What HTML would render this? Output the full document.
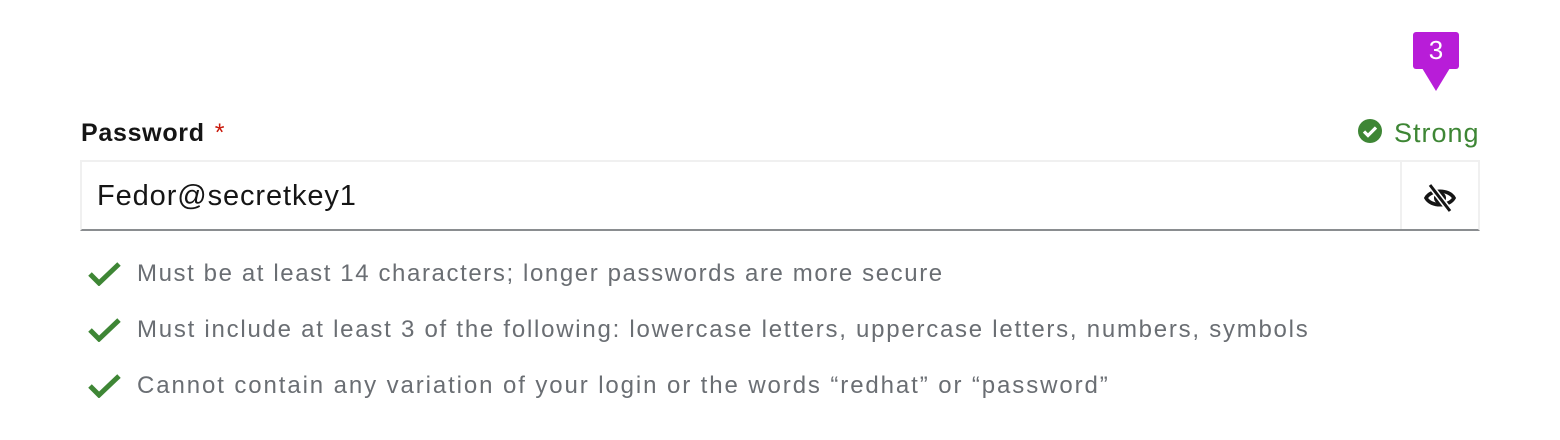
<!DOCTYPE html>
<html><head><style>
body{margin:0;width:1560px;height:440px;background:#fff;font-family:"Liberation Sans",sans-serif;position:relative;overflow:hidden}
.abs{position:absolute;white-space:nowrap}
.label{left:81px;top:119px;font-size:25px;font-weight:bold;color:#151515;letter-spacing:0.7px}
.req{color:#c9190b;margin-left:10px;font-weight:normal}
.strong{left:1394px;top:118px;font-size:27px;color:#3e8635;letter-spacing:1px}
.input{left:80px;top:160px;width:1400px;height:71px;border:2px solid #f0f0f0;border-bottom:2px solid #8a8d90;box-sizing:border-box}
.sep{left:1400px;top:162px;width:2px;height:67px;background:#f0f0f0}
.val{left:97px;top:180px;font-size:29px;color:#151515;letter-spacing:0.9px}
.help{left:137px;font-size:24px;color:#6a6e73;letter-spacing:1.75px}
.chk{left:88px}
</style></head><body>
<div class="abs" style="left:1413px;top:32px;width:46px;height:37px;background:#b81dd8;border-radius:3px"></div>
<svg class="abs" style="left:1420px;top:68px" width="32" height="24"><polygon points="2,0 30,0 16,23" fill="#b81dd8"/></svg>
<div class="abs" style="left:1413px;top:35px;width:46px;text-align:center;color:#fff;font-size:26px">3</div>
<div class="abs label">Password<span class="req">*</span></div>
<svg class="abs" style="left:1357px;top:118px" width="26" height="26" viewBox="0 0 26 26"><circle cx="13" cy="13" r="12" fill="#3e8635"/><path d="M7 13.5l4 4 8-8" stroke="#fff" stroke-width="3.2" fill="none"/></svg>
<div class="abs strong">Strong</div>
<div class="abs input"></div>
<div class="abs sep"></div>
<div class="abs val">Fedor@secretkey1</div>
<svg class="abs" style="left:1423px;top:183px" width="34" height="30" viewBox="0 0 34 30"><path d="M3 15C8 6 26 6 31 15C26 24 8 24 3 15Z" stroke="#151515" stroke-width="3.6" fill="none"/><circle cx="17" cy="15" r="6" fill="#151515"/><path d="M7 2L27 28" stroke="#fff" stroke-width="6"/><path d="M7 2L27 28" stroke="#151515" stroke-width="3"/></svg>
<svg class="abs chk" style="top:262px" width="34" height="24" viewBox="0 0 34 24"><path d="M2 12l9 9L31 2" stroke="#3e8635" stroke-width="5" fill="none"/></svg>
<div class="abs help" style="top:260px;letter-spacing:1.6px">Must be at least 14 characters; longer passwords are more secure</div>
<svg class="abs chk" style="top:318px" width="34" height="24" viewBox="0 0 34 24"><path d="M2 12l9 9L31 2" stroke="#3e8635" stroke-width="5" fill="none"/></svg>
<div class="abs help" style="top:316px">Must include at least 3 of the following: lowercase letters, uppercase letters, numbers, symbols</div>
<svg class="abs chk" style="top:374px" width="34" height="24" viewBox="0 0 34 24"><path d="M2 12l9 9L31 2" stroke="#3e8635" stroke-width="5" fill="none"/></svg>
<div class="abs help" style="top:372px;letter-spacing:1.9px">Cannot contain any variation of your login or the words “redhat” or “password”</div>
</body></html>
